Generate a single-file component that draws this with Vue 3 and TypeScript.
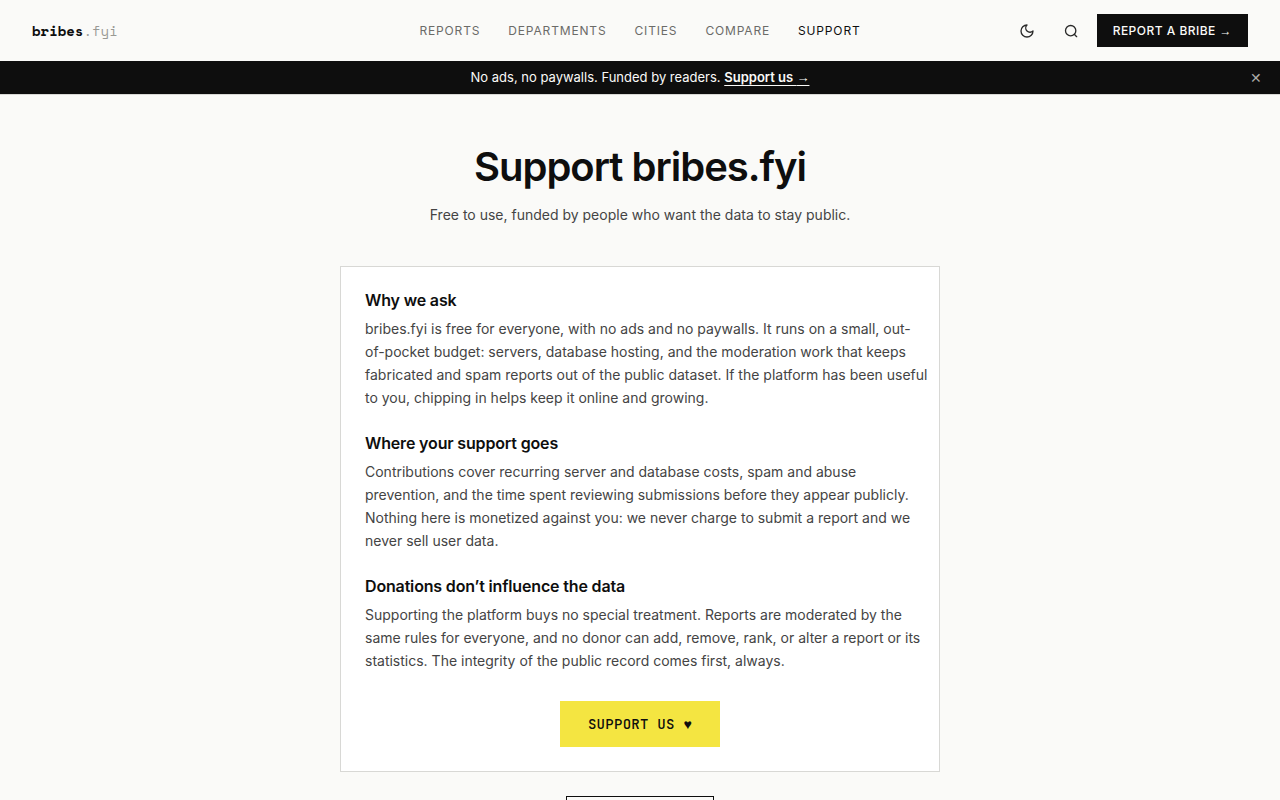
<script setup lang="ts">
import { ref } from 'vue'

interface NavItem {
  label: string
  href: string
  active?: boolean
}

interface Section {
  title: string
  body: string
}

const bannerOpen = ref<boolean>(true)

const navItems: NavItem[] = [
  { label: 'Reports', href: '#reports' },
  { label: 'Departments', href: '#departments' },
  { label: 'Cities', href: '#cities' },
  { label: 'Compare', href: '#compare' },
  { label: 'Support', href: '#support', active: true },
]

// U+2060 keeps "of-pocket" together when a line breaks after "out-".
const sections: Section[] = [
  {
    title: 'Why we ask',
    body: 'bribes.fyi is free for everyone, with no ads and no paywalls. It runs on a small, out-of-\u2060pocket budget: servers, database hosting, and the moderation work that keeps fabricated and spam reports out of the public dataset. If the platform has been useful to you, chipping in helps keep it online and growing.',
  },
  {
    title: 'Where your support goes',
    body: 'Contributions cover recurring server and database costs, spam and abuse prevention, and the time spent reviewing submissions before they appear publicly. Nothing here is monetized against you: we never charge to submit a report and we never sell user data.',
  },
  {
    title: 'Donations don’t influence the data',
    body: 'Supporting the platform buys no special treatment. Reports are moderated by the same rules for everyone, and no donor can add, remove, rank, or alter a report or its statistics. The integrity of the public record comes first, always.',
  },
]
</script>

<template>
  <div class="page">
    <header class="site-header">
      <div class="bar">
        <a class="logo" href="#home">bribes<span class="logo-tld">.fyi</span></a>
        <nav class="nav" aria-label="Main">
          <a
            v-for="item in navItems"
            :key="item.label"
            class="nav-link"
            :class="{ active: item.active }"
            :aria-current="item.active ? 'page' : undefined"
            :href="item.href"
          >{{ item.label }}</a>
        </nav>
        <div class="actions">
          <button class="icon-button" type="button" aria-label="Toggle theme">
            <svg width="16" height="16" viewBox="0 0 24 24" fill="none" stroke="currentColor" stroke-width="2" stroke-linecap="round" stroke-linejoin="round">
              <path d="M12 3a6 6 0 0 0 9 9 9 9 0 1 1-9-9Z" />
            </svg>
          </button>
          <button class="icon-button" type="button" aria-label="Search">
            <svg width="16" height="16" viewBox="0 0 24 24" fill="none" stroke="currentColor" stroke-width="2" stroke-linecap="round" stroke-linejoin="round">
              <circle cx="11.5" cy="11.5" r="7.75" />
              <path d="m20.5 20.5-3.5-3.5" />
            </svg>
          </button>
          <a class="report-button" href="#report">Report a bribe <span class="arrow">→</span></a>
        </div>
      </div>
      <div v-if="bannerOpen" class="banner">
        <p class="banner-text">
          No ads, no paywalls. Funded by readers.
          <a class="banner-link" href="#support">Support us <span class="arrow">→</span></a>
        </p>
        <button class="banner-close" type="button" aria-label="Dismiss" @click="bannerOpen = false">✕</button>
      </div>
    </header>

    <main class="main">
      <h1 class="title">Support bribes.fyi</h1>
      <p class="subtitle">Free to use, funded by people who want the data to stay public.</p>

      <div class="card">
        <section v-for="section in sections" :key="section.title" class="section">
          <h2 class="section-title">{{ section.title }}</h2>
          <p class="section-body">{{ section.body }}</p>
        </section>
        <a class="support-button" href="#donate">Support us ♥</a>
      </div>

      <a class="back-button" href="#reports">View reports</a>
    </main>
  </div>
</template>

<style>
body {
  margin: 0;
  background: #fafaf8;
}
</style>

<style scoped>
.page {
  background: #fafaf8;
  color: #0e0e0e;
  font-family: Inter, "Liberation Sans", sans-serif;
}

a {
  color: inherit;
  text-decoration: none;
}

button {
  border: 0;
  padding: 0;
  background: none;
  font-family: inherit;
  cursor: pointer;
}

.arrow {
  font-family: "Liberation Sans", sans-serif;
  line-height: 1;
}

.site-header {
  border-bottom: 1px solid #d8d8d5;
}

.bar {
  display: grid;
  grid-template-columns: 1fr auto 1fr;
  align-items: center;
  padding: 14px 32px;
}

.logo {
  justify-self: start;
  font-family: "Space Mono", "Liberation Mono", monospace;
  font-size: 14px;
  font-weight: 700;
  line-height: 20px;
}

.logo-tld {
  color: #999994;
  font-weight: 400;
}

.nav {
  display: flex;
  gap: 28px;
}

.nav-link {
  color: #6b6b68;
  font-size: 12px;
  line-height: 20px;
  letter-spacing: 0.07em;
  text-transform: uppercase;
}

.nav-link.active {
  color: #0e0e0e;
}

.actions {
  display: flex;
  align-items: center;
  justify-self: end;
  gap: 8px;
}

.icon-button {
  display: flex;
  align-items: center;
  justify-content: center;
  width: 36px;
  height: 32px;
  color: #2a2a2a;
}

.report-button {
  padding: 8px 16px;
  background: #0e0e0e;
  color: #fafaf8;
  font-size: 12px;
  font-weight: 500;
  line-height: 17px;
  letter-spacing: 0.04em;
  text-transform: uppercase;
}

.banner {
  display: grid;
  grid-template-columns: 32px 1fr 32px;
  align-items: center;
  padding: 0 8px;
  background: #0e0e0e;
  color: #fafaf8;
}

.banner-text {
  grid-column: 2;
  margin: 0;
  padding: 6px 0;
  font-size: 13px;
  line-height: 21px;
  text-align: center;
}

.banner-link {
  font-weight: 600;
  text-decoration: underline;
  text-underline-offset: 3px;
}

.banner-close {
  color: #aaaaa6;
  font-size: 14px;
  line-height: 24px;
}

.main {
  display: flex;
  flex-direction: column;
  align-items: center;
  padding: 48px 24px 0;
}

.title {
  margin: 0;
  font-size: 40px;
  font-weight: 600;
  line-height: 48px;
  letter-spacing: -1px;
  text-align: center;
}

.subtitle {
  margin: 12px 0 40px;
  color: #444444;
  font-size: 14px;
  line-height: 23px;
  text-align: center;
}

.card {
  box-sizing: border-box;
  display: flex;
  flex-direction: column;
  gap: 25px;
  width: 100%;
  max-width: 600px;
  padding: 24px;
  border: 1px solid #d8d8d5;
  background: #ffffff;
}

.section {
  margin-right: -16px;
}

.section-title {
  margin: 0 0 8px;
  font-size: 16px;
  font-weight: 600;
  line-height: 18px;
  letter-spacing: -0.01em;
}

.section-body {
  margin: 0;
  color: #444444;
  font-size: 14px;
  line-height: 23px;
}

.support-button {
  align-self: center;
  margin-top: 4px;
  padding: 14px 28px;
  background: #f4e541;
  font-family: "JetBrains Mono", "Liberation Mono", monospace;
  font-size: 14px;
  font-weight: 500;
  line-height: 18px;
  letter-spacing: 0.02em;
  text-transform: uppercase;
}

.back-button {
  margin-top: 24px;
  padding: 12px 26px;
  border: 1px solid #0e0e0e;
  font-size: 12px;
  line-height: 18px;
  letter-spacing: 0.04em;
  text-transform: uppercase;
}
</style>
